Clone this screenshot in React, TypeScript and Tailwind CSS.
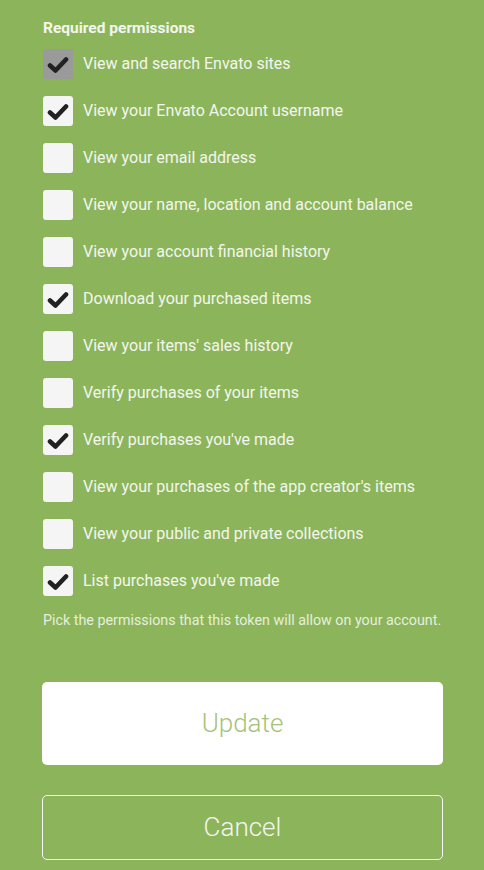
const permissions = [
  { label: "View and search Envato sites", checked: true, disabled: true },
  { label: "View your Envato Account username", checked: true },
  { label: "View your email address", checked: false },
  { label: "View your name, location and account balance", checked: false },
  { label: "View your account financial history", checked: false },
  { label: "Download your purchased items", checked: true },
  { label: "View your items' sales history", checked: false },
  { label: "Verify purchases of your items", checked: false },
  { label: "Verify purchases you've made", checked: true },
  { label: "View your purchases of the app creator's items", checked: false },
  { label: "View your public and private collections", checked: false },
  { label: "List purchases you've made", checked: true },
];

const Check = () => (
  <svg width="22" height="18" viewBox="0 0 22 18" className="mt-[1px]">
    <path
      d="M3 9.5 L8.5 14.5 L19 3.5"
      fill="none"
      stroke="#222"
      strokeWidth="4.6"
      strokeLinecap="round"
      strokeLinejoin="round"
    />
  </svg>
);

const Row = ({ label, checked, disabled }: { label: string; checked: boolean; disabled?: boolean }) => {
  return (
    <label className="flex items-center h-[30px]">
      <span
        className={
          "flex items-center justify-center w-[30px] h-[30px] rounded-[3px] shrink-0 " +
          (disabled ? "bg-[#9a9a9a]" : "bg-[#f5f5f5]")
        }
      >
        {checked && <Check />}
      </span>
      <span className="ml-[10px] text-[16px] text-[#f3f6ee]">{label}</span>
    </label>
  );
};

export default function App() {
  return (
    <div
      className="w-[484px] h-[870px] bg-[#8cb55b] overflow-hidden"
      style={{ fontFamily: "Roboto, 'Liberation Sans', sans-serif" }}
    >
      <div className="px-[43px] pt-[18px]">
        <h3 className="text-[15.5px] font-bold text-[#f3f6ee] leading-[20px]">Required permissions</h3>
        <div className="flex flex-col gap-[17px] mt-[8px] pt-[3px]">
          {permissions.map((p) => (
            <Row key={p.label} {...p} />
          ))}
        </div>
        <p className="mt-[15px] text-[14.3px] text-[#e6eedb] leading-[18px] whitespace-nowrap">
          Pick the permissions that this token will allow on your account.
        </p>
      </div>
      <div className="px-[42px] pt-[53px] flex flex-col gap-[30px]">
        <button className="w-[401px] h-[83px] bg-white rounded-[5px] text-[26px] font-light text-[#a6c27a]">
          Update
        </button>
        <button className="w-[401px] h-[65px] border border-[#f5f5f5] rounded-[5px] text-[26px] font-light text-[#f3f6ee]">
          Cancel
        </button>
      </div>
    </div>
  );
}
